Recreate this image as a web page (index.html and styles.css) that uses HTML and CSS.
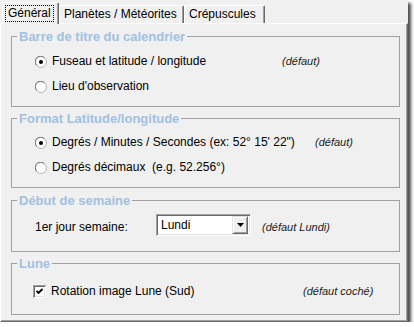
FILE: index.html
```html
<!DOCTYPE html>
<html lang="fr">
<head>
<meta charset="utf-8">
<title>Options</title>
<link rel="stylesheet" href="styles.css">
</head>
<body>
<div class="win">
  <div class="tabs">
    <div class="tab sel"><span class="focus">Général</span></div>
    <div class="tab t2">Planètes / Météorites</div>
    <div class="tab t3">Crépuscules</div>
  </div>
  <div class="pane">
    <fieldset class="grp g1">
      <legend>Barre de titre du calendrier</legend>
      <div class="row">
        <svg class="radio" width="12" height="12" viewBox="0 0 12 12"><circle cx="6" cy="6" r="5.5" fill="#fff" stroke="#b4b4b4"/><path d="M1.7 9.3 A5 5 0 0 1 9.3 1.7" fill="none" stroke="#707070"/><circle cx="6" cy="6" r="2" fill="#000"/></svg>
        <span class="lbl w1">Fuseau et latitude / longitude</span>
        <span class="def">(défaut)</span>
      </div>
      <div class="row">
        <svg class="radio" width="12" height="12" viewBox="0 0 12 12"><circle cx="6" cy="6" r="5.5" fill="#fff" stroke="#b4b4b4"/><path d="M1.7 9.3 A5 5 0 0 1 9.3 1.7" fill="none" stroke="#707070"/></svg>
        <span class="lbl">Lieu d'observation</span>
      </div>
    </fieldset>
    <fieldset class="grp g2">
      <legend>Format Latitude/longitude</legend>
      <div class="row">
        <svg class="radio" width="12" height="12" viewBox="0 0 12 12"><circle cx="6" cy="6" r="5.5" fill="#fff" stroke="#b4b4b4"/><path d="M1.7 9.3 A5 5 0 0 1 9.3 1.7" fill="none" stroke="#707070"/><circle cx="6" cy="6" r="2" fill="#000"/></svg>
        <span class="lbl w2">Degrés / Minutes / Secondes (ex: 52° 15' 22")</span>
        <span class="def">(défaut)</span>
      </div>
      <div class="row">
        <svg class="radio" width="12" height="12" viewBox="0 0 12 12"><circle cx="6" cy="6" r="5.5" fill="#fff" stroke="#b4b4b4"/><path d="M1.7 9.3 A5 5 0 0 1 9.3 1.7" fill="none" stroke="#707070"/></svg>
        <span class="lbl">Degrés décimaux&nbsp; (e.g. 52.256°)</span>
      </div>
    </fieldset>
    <fieldset class="grp g3">
      <legend>Début de semaine</legend>
      <div class="row row-combo">
        <span class="lbl w3">1er jour semaine:</span>
        <div class="combo">
          <span class="combo-val">Lundi</span>
          <span class="combo-btn"><svg width="7" height="4" viewBox="0 0 7 4"><path d="M0 0 H7 L3.5 4 Z" fill="#000"/></svg></span>
        </div>
        <span class="def def3">(défaut Lundi)</span>
      </div>
    </fieldset>
    <fieldset class="grp g4">
      <legend>Lune</legend>
      <div class="row row-check">
        <svg class="check" width="13" height="13" viewBox="0 0 13 13"><rect x="0" y="0" width="13" height="13" fill="#a0a0a0"/><rect x="1" y="1" width="12" height="12" fill="#fff"/><rect x="1" y="1" width="11" height="11" fill="#696969"/><rect x="2" y="2" width="10" height="10" fill="#e3e3e3"/><rect x="2" y="2" width="9" height="9" fill="#fff"/><path d="M3.5 6 L5.5 8 L9.5 4" fill="none" stroke="#000" stroke-width="1.8"/></svg>
        <span class="lbl w4">Rotation image Lune (Sud)</span>
        <span class="def">(défaut coché)</span>
      </div>
    </fieldset>
  </div>
</div>
</body>
</html>
```
FILE: styles.css
```css
html, body {
  margin: 0;
  padding: 0;
  background: #fff;
}
body {
  font-family: "Liberation Sans", Arial, sans-serif;
  font-size: 12px;
  line-height: 15px;
  color: #000;
}
.win {
  width: 408px;
  height: 322px;
  background: #f0f0f0;
  box-shadow: 3px 3px 3px rgba(0, 0, 0, 0.7);
  box-sizing: border-box;
}
.tabs {
  display: flex;
  align-items: flex-end;
  height: 23px;
  padding-left: 2px;
}
.tab {
  box-sizing: border-box;
  height: 18px;
  padding: 1px 5px 0 4px;
  border-top: 1px solid #fff;
  border-left: 1px solid #fff;
  border-right: 1px solid #696969;
  box-shadow: inset -1px 0 0 #a0a0a0;
  border-radius: 2px 2px 0 0;
  background: #f0f0f0;
  white-space: nowrap;
}
.t2 { width: 125px; }
.t3 { width: 81px; }
.sel {
  position: relative;
  z-index: 1;
  height: 22px;
  width: 57px;
  margin-bottom: -1px;
  padding: 2px 0 0 2px;
}
.focus {
  display: inline-block;
  border: 1px dotted #000;
  padding: 0 2px;
}
.pane {
  box-sizing: border-box;
  height: 299px;
  border-top: 1px solid #fff;
  border-left: 1px solid #fff;
  border-right: 1px solid #696969;
  border-bottom: 1px solid #696969;
  box-shadow: inset -1px -1px 0 #a0a0a0;
  padding: 5px 7px 0 10px;
}
.grp {
  margin: 0;
  width: 389px;
  box-sizing: border-box;
  border: 1px solid #a0a0a0;
  padding: 0;
  min-inline-size: 0;
}
.grp legend {
  font-weight: bold;
  font-size: 13px;
  line-height: 15px;
  color: #a2c1e2;
  padding: 0 2px;
  margin-left: 5px;
}
.g1 { padding: 5px 0 7px; }
.g2 { margin-top: 4px; padding: 4px 0 7px; }
.g3 { margin-top: 5px; padding: 6px 0 15px; }
.g4 { margin-top: 4px; padding: 13px 0 15px; }
.row {
  display: flex;
  align-items: center;
  height: 25px;
  padding-left: 23px;
}
.radio {
  flex: none;
  margin-right: 5px;
}
.lbl {
  white-space: nowrap;
}
.w1 { width: 230px; }
.w2 { width: 263px; }
.w3 { width: 121px; }
.w4 { width: 252px; }
.def {
  font-style: italic;
  font-size: 11px;
  color: #1a1a1a;
  white-space: nowrap;
}
.row-combo {
  align-items: flex-start;
  height: 22px;
}
.row-combo .lbl, .row-combo .def {
  margin-top: 6px;
}
.def3 { margin-left: 11px; }
.combo {
  box-sizing: border-box;
  width: 95px;
  height: 22px;
  display: flex;
  align-items: center;
  background: #fff;
  border-top: 1px solid #a0a0a0;
  border-left: 1px solid #a0a0a0;
  border-right: 1px solid #fff;
  border-bottom: 1px solid #fff;
  box-shadow: inset 1px 1px 0 #696969, inset -1px -1px 0 #e3e3e3;
  padding: 2px;
}
.combo-val {
  flex: 1;
  padding-left: 2px;
}
.combo-btn {
  box-sizing: border-box;
  width: 16px;
  height: 18px;
  display: flex;
  align-items: center;
  justify-content: center;
  background: #f0f0f0;
  border-top: 1px solid #e3e3e3;
  border-left: 1px solid #e3e3e3;
  border-right: 1px solid #696969;
  border-bottom: 1px solid #696969;
  box-shadow: inset 1px 1px 0 #fff, inset -1px -1px 0 #a0a0a0;
}
.row-check {
  height: 15px;
  padding-left: 21px;
}
.check {
  flex: none;
  margin-right: 5px;
}
```
